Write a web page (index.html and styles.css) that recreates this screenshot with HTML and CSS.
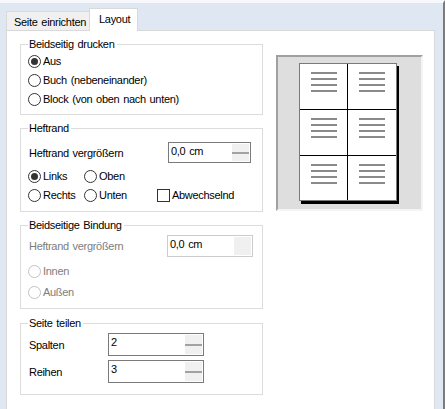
FILE: index.html
```html
<!DOCTYPE html>
<html lang="de">
<head>
<meta charset="utf-8">
<link rel="stylesheet" href="styles.css">
</head>
<body>
<div class="window">
  <div class="main">
    <div class="tabs">
      <div class="tab">Seite einrichten</div>
      <div class="tab tab-active">Layout</div>
    </div>
    <div class="panel">
      <div class="col">
        <fieldset class="group g1">
          <legend>Beidseitig drucken</legend>
          <label class="opt"><span class="radio checked"></span>Aus</label>
          <label class="opt"><span class="radio"></span>Buch (nebeneinander)</label>
          <label class="opt"><span class="radio"></span>Block (von oben nach unten)</label>
        </fieldset>
        <fieldset class="group g2">
          <legend>Heftrand</legend>
          <div class="field">
            <span class="flabel wide">Heftrand vergrößern</span>
            <div class="spin w83"><span class="val">0,0 cm</span><span class="btn"><i></i></span></div>
          </div>
          <div class="grid3">
            <label class="opt"><span class="radio checked"></span>Links</label>
            <label class="opt"><span class="radio"></span>Oben</label>
            <span></span>
            <label class="opt"><span class="radio"></span>Rechts</label>
            <label class="opt"><span class="radio"></span>Unten</label>
            <label class="opt chk"><span class="box"></span>Abwechselnd</label>
          </div>
        </fieldset>
        <fieldset class="group g3 disabled">
          <legend>Beidseitige Bindung</legend>
          <div class="field">
            <span class="flabel wide">Heftrand vergrößern</span>
            <div class="spin w85 off"><span class="val">0,0 cm</span><span class="btn"></span></div>
          </div>
          <label class="opt o21 first"><span class="radio"></span>Innen</label>
          <label class="opt o21"><span class="radio"></span>Außen</label>
        </fieldset>
        <fieldset class="group g4">
          <legend>Seite teilen</legend>
          <div class="field f4">
            <span class="flabel narrow">Spalten</span>
            <div class="spin w96 tall"><span class="val">2</span><span class="btn"><i></i></span></div>
          </div>
          <div class="field f4">
            <span class="flabel narrow">Reihen</span>
            <div class="spin w96 tall"><span class="val">3</span><span class="btn"><i></i></span></div>
          </div>
        </fieldset>
      </div>
      <div class="preview">
        <div class="page">
          <div class="cell l"><b></b><b></b><b></b><b></b></div>
          <div class="cell r"><b></b><b></b><b></b><b></b></div>
          <div class="cell l"><b></b><b></b><b></b><b></b></div>
          <div class="cell r"><b></b><b></b><b></b><b></b></div>
          <div class="cell l"><b></b><b></b><b></b><b></b></div>
          <div class="cell r"><b></b><b></b><b></b><b></b></div>
        </div>
      </div>
    </div>
  </div>
</div>
</body>
</html>
```

FILE: styles.css
```css
* { box-sizing: border-box; }
html, body { margin: 0; padding: 0; }
body {
  font-family: "Liberation Sans", Arial, sans-serif;
  font-size: 11px;
  letter-spacing: -0.3px;
  word-spacing: 1px;
  color: #000;
  background: #dfe7f3;
}
.window {
  width: 445px;
  height: 409px;
  overflow: hidden;
  background: #dfe7f3;
  border-top: 3px solid #f6f8fc;
  border-right: 2px solid #7c7c7c;
  padding-left: 6px;
}
.main { width: 429px; }
.tabs {
  height: 27px;
  display: flex;
  align-items: flex-end;
}
.tab {
  height: 19px;
  padding: 4px 0 0 7px;
  width: 83px;
  line-height: 13px;
  border: 1px solid #d9d9d9;
  border-bottom: none;
  border-right: none;
  background: #f0f0f0;
  white-space: nowrap;
}
.tab-active {
  position: relative;
  z-index: 1;
  height: 23px;
  width: 49px;
  margin-bottom: -1px;
  padding: 4px 0 0 9px;
  background: #fff;
  border-right: 1px solid #d9d9d9;
}
.panel {
  height: 400px;
  background: #fff;
  border: 1px solid #d9d9d9;
  padding: 7px 0 0 13px;
  display: flex;
  align-items: flex-start;
}
.col { width: 243px; }
.group {
  margin: 0;
  border: 1px solid #dcdcdc;
  padding: 1px 6px 5px 7px;
  min-width: 0;
}
.group legend {
  padding: 0 2px 0 1px;
  line-height: 13px;
  margin-left: 0;
}
.g2 { margin-top: 7px; padding-top: 7px; padding-bottom: 6px; }
.g3 { margin-top: 7px; padding-top: 3px; padding-bottom: 5px; }
.g4 { margin-top: 8px; padding-top: 3px; padding-bottom: 11px; }
.opt {
  display: flex;
  align-items: center;
  height: 19px;
  line-height: 13px;
  white-space: nowrap;
}
.o21 { height: 21px; }
.o21.first { margin-top: 4px; }
.radio {
  width: 13px;
  height: 13px;
  border: 1px solid #333;
  border-radius: 50%;
  background: #fff;
  margin-right: 2px;
  display: flex;
  align-items: center;
  justify-content: center;
  flex: none;
}
.radio.checked::after {
  content: "";
  width: 7px;
  height: 7px;
  border-radius: 50%;
  background: #333;
}
.box {
  width: 13px;
  height: 13px;
  border: 1px solid #333;
  background: #fff;
  margin-right: 2px;
  flex: none;
}
.chk { margin-left: 2px; }
.grid3 {
  margin-top: 4px;
  display: grid;
  grid-template-columns: 56px 71px auto;
}
.field {
  display: flex;
  align-items: center;
}
.f4 + .f4 { margin-top: 4px; }
.flabel { padding-left: 1px; white-space: nowrap; }
.wide { width: 140px; }
.narrow { width: 80px; }
.spin {
  height: 21px;
  border: 1px solid #7a7a7a;
  background: #fff;
  display: flex;
  justify-content: space-between;
  padding: 1px 1px 1px 2px;
}
.tall { height: 23px; }
.w83 { width: 83px; }
.w85 { width: 86px; margin-left: -1px; height: 22px; }
.w96 { width: 96px; }
.val { line-height: 13px; padding-top: 1px; }
.spin .btn {
  width: 17px;
  background: #f0f0f0;
  display: flex;
  align-items: center;
}
.spin .btn i {
  display: block;
  width: 100%;
  height: 2px;
  background: #a2a2a2;
}
.disabled .flabel, .disabled .opt { color: #7d7d7d; }
.disabled .radio { border-color: #c2c2c2; }
.spin.off { border-color: #cccccc; }
.spin.off .val { color: #000; }
.preview {
  margin: 17px 0 0 13px;
  width: 147px;
  height: 156px;
  background: #dedede;
  border: 2px solid #a0a0a0;
  border-right-color: #f4f4f4;
  border-bottom-color: #f4f4f4;
  padding: 6px 0 0 21px;
}
.page {
  width: 98px;
  height: 138px;
  border: 1px solid #7a7a7a;
  background: #000;
  box-shadow: 2px 3px 0 #000;
  display: grid;
  grid-template-columns: 47px 48px;
  grid-template-rows: 45px 45px 44px;
  gap: 1px;
}
.cell {
  background: #fff;
  display: flex;
  flex-direction: column;
  align-items: center;
  padding-top: 8px;
  gap: 4px;
}
.cell b {
  display: block;
  width: 26px;
  height: 2px;
  background: #8a8a8a;
}
```
